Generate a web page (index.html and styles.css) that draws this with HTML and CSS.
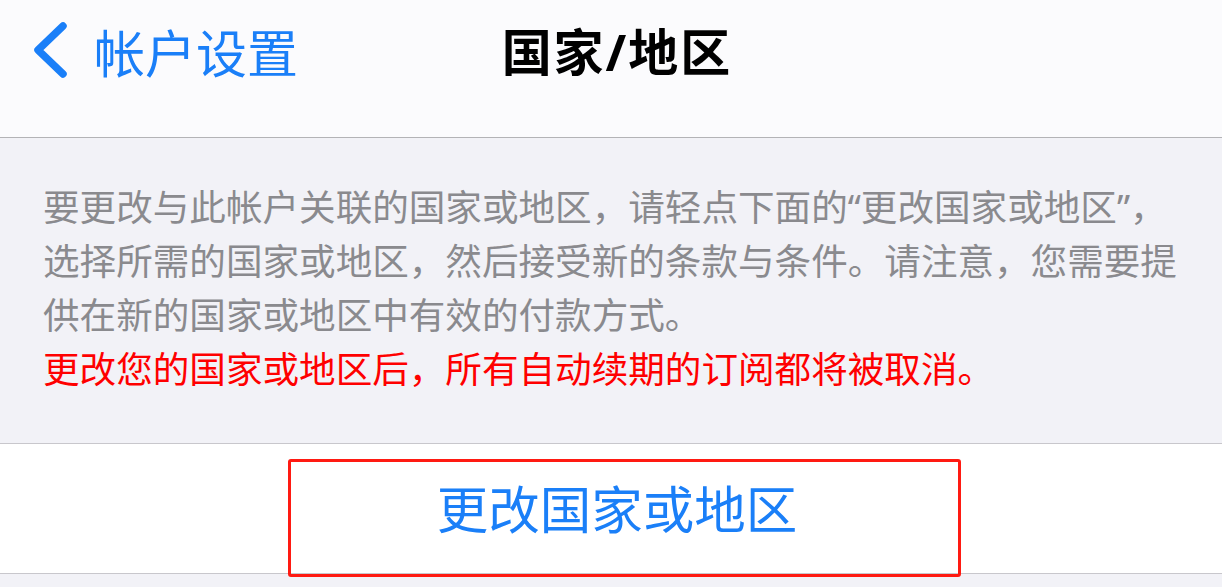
FILE: index.html
```html
<!DOCTYPE html>
<html lang="zh-CN">
<head>
    <meta charset="UTF-8">
    <meta name="viewport" content="width=device-width, initial-scale=1.0">
    <title>国家/地区</title>
    <link rel="stylesheet" href="styles.css">
</head>
<body>
    <header class="navbar">
        <a class="nav-back" href="#">
            <svg class="chevron" width="36" height="64" viewBox="0 0 36 64">
                <path d="M31 8 L6 32 L31 56" fill="none" stroke="#1a7ff8" stroke-width="7.5" stroke-linecap="round" stroke-linejoin="round"/>
            </svg>
            <span>帐户设置</span>
        </a>
        <h1 class="nav-title">国家/地区</h1>
        <div></div>
    </header>

    <section class="notice">
        <p>要更改与此帐户关联的国家或地区，请轻点下面的“更改国家或地区”，选择所需的国家或地区，然后接受新的条款与条件。请注意，您需要提供在新的国家或地区中有效的付款方式。</p>
        <p class="warning">更改您的国家或地区后，所有自动续期的订阅都将被取消。</p>
    </section>

    <div class="action-row">
        <a class="action" href="#">更改国家或地区</a>
        <div class="highlight"></div>
    </div>

    <div class="footer-gap"></div>
</body>
</html>
```

FILE: styles.css
```css
body {
    margin: 0;
    padding: 0;
    font-family: "Noto Sans CJK SC", "Noto Sans", sans-serif;
    background-color: #f2f2f7;
    width: 1222px;
    height: 587px;
    overflow: hidden;
}

.navbar {
    height: 137px;
    background-color: #fbfbfd;
    border-bottom: 1px solid #b3b3b6;
    display: grid;
    grid-template-columns: 1fr auto 1fr;
    align-items: center;
    padding: 0 0 0 32px;
}

.nav-back {
    display: flex;
    align-items: center;
    gap: 26px;
    color: #1a7ff8;
    text-decoration: none;
    font-size: 51px;
    line-height: 1;
    margin-top: -34px;
}

.chevron {
    display: block;
    margin-top: -4px;
}

.nav-title {
    margin: 0;
    font-family: "Noto Sans", "Noto Sans CJK SC", sans-serif;
    font-size: 50px;
    font-weight: 700;
    color: #000;
    line-height: 1;
    letter-spacing: 2px;
    margin-top: -34px;
    margin-left: -20px;
}

.notice {
    padding: 42px 20px 47px 43px;
    border-bottom: 1px solid #c8c7cc;
}

.notice p {
    margin: 0;
    font-family: "Noto Sans", "Noto Sans CJK SC", sans-serif;
    font-size: 36.6px;
    line-height: 54px;
    color: #8a8a8e;
}

.notice .warning {
    color: #ff0000;
}

.action-row {
    position: relative;
    height: 129px;
    background-color: #fff;
    border-bottom: 1px solid #c8c7cc;
    display: flex;
    justify-content: center;
    align-items: center;
}

.action {
    font-size: 51.5px;
    color: #1a7ff8;
    text-decoration: none;
    line-height: 1;
    margin-left: 12px;
    margin-top: -4px;
}

.highlight {
    position: absolute;
    left: 288px;
    top: 15px;
    width: 667px;
    height: 112px;
    border: 3px solid #ff1a12;
    border-radius: 3px;
}

.footer-gap {
    height: 12px;
}
```
